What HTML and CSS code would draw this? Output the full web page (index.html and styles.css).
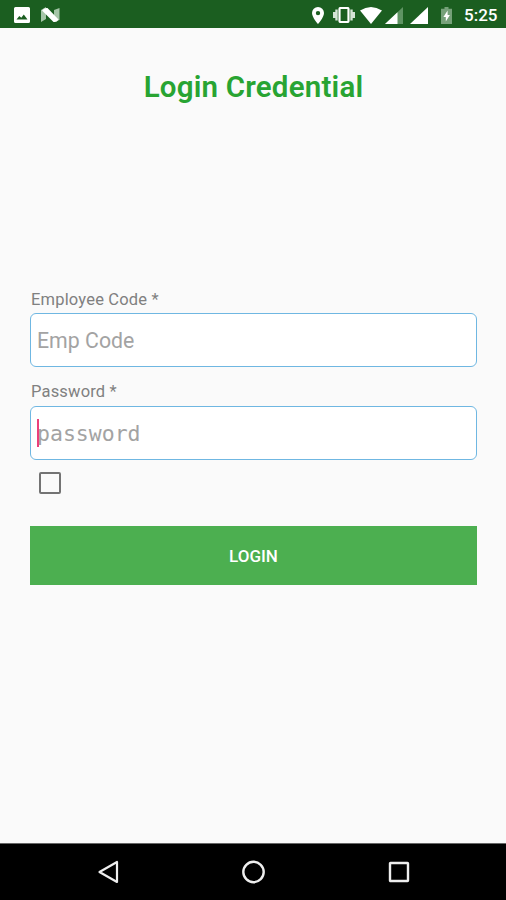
FILE: index.html
```html
<!DOCTYPE html>
<html lang="en">
<head>
  <meta charset="UTF-8" />
  <meta name="viewport" content="width=device-width, initial-scale=1.0" />
  <title>Login Credential</title>
  <link rel="stylesheet" href="styles.css">
</head>
<body>
  <header class="status-bar">
    <div class="notifications">
      <svg width="16" height="16" viewBox="0 0 16 16"><path fill="#fff" fill-rule="evenodd" d="M1.5 0h13A1.5 1.5 0 0 1 16 1.5v13a1.5 1.5 0 0 1-1.5 1.5h-13A1.5 1.5 0 0 1 0 14.5v-13A1.5 1.5 0 0 1 1.5 0zM2.500 12.500h11L9.800 7.500 7.300 10.700 5.300 9z"/></svg>
      <svg width="19" height="16" viewBox="0 0 19 16"><path fill="#a5c5a7" d="M0 3l5-3v12l-5 3zM13 3l5.500-2v12L13 15z"/><path fill="#fff" d="M1 3.500Q3 .5 6.500 1L17.500 12.500Q16 15.500 12.500 15z"/></svg>
    </div>
    <div class="system">
      <svg class="pin" width="12" height="17" viewBox="0 0 12 17"><path fill="#fff" fill-rule="evenodd" d="M6 0a6 6 0 0 1 6 6c0 4.500-6 11-6 11S0 10.500 0 6a6 6 0 0 1 6-6zm0 3.900a2.200 2.200 0 1 0 0 4.400 2.200 2.200 0 0 0 0-4.400z"/></svg>
      <svg class="vibrate" width="22" height="16" viewBox="0 0 22 16"><rect x="6.500" y="1" width="9" height="14" rx="1" fill="none" stroke="#fff" stroke-width="2.200"/><path fill="none" stroke="#d5e4d6" stroke-width="2.400" d="M3.500 2.500v11M18.500 2.500v11M1.200 5v6M20.800 5v6"/></svg>
      <svg class="wifi" width="22" height="17" viewBox="0 0 22 17"><path fill="#fff" d="M0 3.500Q11-3.500 22 3.500L11 17z"/></svg>
      <svg class="signal-weak" width="18" height="17" viewBox="0 0 18 17"><path fill="#5f9463" d="M0 17L18 0v17z"/><path fill="#fff" d="M0 17L12.500 5.200V17z"/></svg>
      <svg class="signal" width="18" height="17" viewBox="0 0 18 17"><path fill="#fff" d="M0 17L18 0v17z"/></svg>
      <svg class="battery" width="11" height="17" viewBox="0 0 11 17"><path fill="#76a179" d="M3.500 0h4v1.700H11V17H0V1.700h3.500z"/><path fill="#fff" d="M6.600 3.500L2.400 10h2.400v4.500L8.900 8H6.600z"/></svg>
      <span class="clock">5:25</span>
    </div>
  </header>

  <main>
    <h1>Login Credential</h1>
    <form>
      <label for="empCode">Employee Code *</label>
      <input type="text" id="empCode" class="field" placeholder="Emp Code" />
      <label for="password">Password *</label>
      <div class="password-wrap">
        <input type="password" id="password" class="field mono" placeholder="password" />
        <span class="caret"></span>
      </div>
      <input type="checkbox" class="show-password" aria-label="Show password" />
      <button type="button">LOGIN</button>
    </form>
  </main>

  <footer class="nav-bar">
    <svg width="24" height="24" viewBox="0 0 24 24"><path fill="none" stroke="#eee" stroke-width="2.200" stroke-linejoin="round" d="M20 2v20L2.500 12z"/></svg>
    <svg width="24" height="24" viewBox="0 0 24 24"><circle cx="11.500" cy="12" r="10.200" fill="none" stroke="#eee" stroke-width="2.400"/></svg>
    <svg width="24" height="24" viewBox="0 0 24 24"><rect x="3" y="3" width="18" height="18" rx=".5" fill="none" stroke="#eee" stroke-width="2.400"/></svg>
  </footer>
</body>
</html>
```
FILE: styles.css
```css
* {
  box-sizing: border-box;
}

body {
  margin: 0;
  height: 900px;
  display: flex;
  flex-direction: column;
  font-family: Roboto, sans-serif;
  background: #fafafa;
}

svg {
  display: block;
}

.status-bar {
  height: 28px;
  padding: 0 8px 0 14px;
  display: flex;
  justify-content: space-between;
  align-items: center;
  background: #1b5e20;
}

.notifications {
  display: flex;
  gap: 11px;
  padding-top: 2px;
}

.system {
  display: flex;
  align-items: center;
  padding-top: 2px;
}

.pin {
  margin-right: 9px;
}

.vibrate {
  margin-right: 5px;
}

.wifi {
  margin-right: 3px;
}

.signal-weak {
  margin-right: 7px;
}

.signal {
  margin-right: 13px;
}

.battery {
  margin-right: 12px;
}

.clock {
  width: 34px;
  font-size: 17px;
  font-weight: 500;
  line-height: 20px;
  color: #fff;
}

main {
  flex: 1;
  padding: 41px 29px 0 30px;
}

h1 {
  margin: 0;
  height: 36px;
  font-size: 29.5px;
  font-weight: 600;
  line-height: 36px;
  letter-spacing: 0.2px;
  text-align: center;
  color: #28a432;
}

form {
  margin-top: 185px;
}

label {
  display: block;
  height: 20px;
  margin-bottom: 3px;
  padding-left: 1px;
  font-size: 16.5px;
  line-height: 20px;
  letter-spacing: 0.18px;
  color: #808080;
}

.field {
  display: block;
  width: 100%;
  height: 54px;
  margin-bottom: 15px;
  padding: 0 6px;
  border: 1.5px solid #6fb7e2;
  border-radius: 6px;
  background: #fff;
  font-family: Roboto, sans-serif;
  font-size: 21.3px;
  outline: none;
}

.field::placeholder {
  color: #a3a3a3;
}

.mono {
  margin-bottom: 0;
  font-family: "DejaVu Sans Mono", monospace;
  font-size: 21.5px;
}

.password-wrap {
  position: relative;
  margin-top: 4px;
}

.caret {
  position: absolute;
  left: 7px;
  top: 13px;
  width: 2px;
  height: 28px;
  background: #ec407a;
}

.show-password {
  appearance: none;
  display: block;
  width: 22px;
  height: 22px;
  margin: 12px 0 0 9px;
  border: 2px solid #737373;
  border-radius: 2px;
}

button {
  display: block;
  width: 100%;
  height: 59px;
  margin-top: 32px;
  padding: 0;
  border: none;
  background: #4caf50;
  color: #fff;
  font-family: Roboto, sans-serif;
  font-size: 17px;
  font-weight: 500;
}

.nav-bar {
  height: 57px;
  padding: 0 95px 0 97px;
  display: flex;
  justify-content: space-between;
  align-items: center;
  border-top: 1px solid #666;
  background: #000;
}
```
